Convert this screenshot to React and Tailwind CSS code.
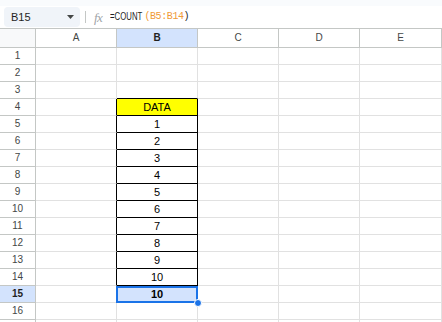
import React from "react";

const COLS = ["A", "B", "C", "D", "E"];
const DATA = { 4: "DATA", 5: "1", 6: "2", 7: "3", 8: "4", 9: "5", 10: "6", 11: "7", 12: "8", 13: "9", 14: "10", 15: "10" };

function Row({ n }) {
  const sel = n === 15;
  const boxed = n >= 4 && n <= 14;
  return (
    <div className="flex h-[17px]">
      <div
        className={
          "w-[36px] shrink-0 border-r border-b border-[#c4c7c5] flex items-center justify-center text-[10px] leading-none " +
          (sel ? "bg-[#d3e3fd] font-bold text-[#1f1f1f]" : "bg-white text-[#444746]")
        }
      >
        {n <= 16 ? n : null}
      </div>
      {COLS.map((c, i) => {
        const isB = c === "B";
        const isA = c === "A";
        let cls = "shrink-0 border-r border-b flex items-center justify-center text-[11px] leading-none text-black relative ";
        cls += i === 4 ? "w-[82px] " : "w-[81px] ";
        let rColor = "border-r-[#e1e1e1] ";
        let bColor = "border-b-[#e1e1e1] ";
        if (isA && boxed) rColor = "border-r-black ";
        if (isB && boxed) {
          rColor = "border-r-black ";
          bColor = "border-b-black ";
        }
        if (isB && n === 3) bColor = "border-b-black ";
        cls += rColor + bColor;
        if (isB && n === 4) cls += "bg-[#ffff00] ";
        else if (isB && sel) cls += "bg-[#d3e3fd] font-bold ";
        else cls += "bg-white ";
        return (
          <div key={c} className={cls}>
            {isB ? DATA[n] : null}
            {isB && sel ? (
              <>
                <div className="absolute left-[-1px] top-0 w-[82px] h-[17px] border-2 border-[#1a73e8]" />
                <div className="absolute right-[-5px] bottom-[-5px] w-[8px] h-[8px] rounded-full bg-[#1a73e8] border border-white z-10" />
              </>
            ) : null}
          </div>
        );
      })}
    </div>
  );
}

export default function App() {
  const rows = Array.from({ length: 17 }, (_, i) => i + 1);
  return (
    <div className="w-[442px] h-[322px] overflow-hidden bg-white font-['Liberation_Sans',Arial,sans-serif] text-[#1f1f1f]">
      {/* toolbar */}
      <div className="h-[6px] bg-[#f9fbfd]" />
      <div className="h-[22px] flex items-start">
        <div className="ml-[4px] mt-[1px] w-[76px] h-[20px] rounded-[4px] bg-[#f0f4f9] flex items-center justify-between pl-[7px] pr-[6px]">
          <span className="text-[11px] leading-none text-[#1f1f1f]">B15</span>
          <svg width="7" height="4" viewBox="0 0 7 4">
            <path d="M0 0 L7 0 L3.5 4 Z" fill="#444746" />
          </svg>
        </div>
        <div className="ml-[5px] mt-[5px] w-px h-[12px] bg-[#c4c7c5]" />
        <div className="ml-[8px] mt-[3px] h-[16px] flex items-center">
          <span className="font-['Liberation_Serif',serif] italic text-[13px] leading-none text-[#a0a4a8] tracking-[-0.5px]">fx</span>
        </div>
        <div className="ml-[8px] mt-[3px] h-[16px] flex items-center text-[10px] leading-none whitespace-nowrap">
          <span className="inline-block w-[34px] overflow-visible">
            <span className="inline-block origin-left scale-x-[0.78] text-[#1f1f1f]">=COUNT</span>
          </span>
          <span className="text-[#f09a36] font-['Liberation_Mono',monospace] text-[10px] tracking-[-0.4px]">(B5:B14</span>
          <span className="text-[#1f1f1f] font-['Liberation_Mono',monospace] text-[10px]">)</span>
        </div>
      </div>
      {/* column headers */}
      <div className="flex h-[20px] border-t border-b border-[#c4c7c5]">
        <div className="w-[36px] shrink-0 border-r border-[#c4c7c5] bg-[#f8f9fa]" />
        {COLS.map((c, i) => (
          <div
            key={c}
            className={
              "shrink-0 border-r border-[#c4c7c5] flex items-center justify-center text-[10px] leading-none " +
              (i === 4 ? "w-[82px] " : "w-[81px] ") +
              (c === "B" ? "bg-[#d3e3fd] font-bold text-[#1f1f1f]" : "bg-white text-[#444746]")
            }
          >
            {c}
          </div>
        ))}
      </div>
      {rows.map((n) => (
        <Row key={n} n={n} />
      ))}
    </div>
  );
}
